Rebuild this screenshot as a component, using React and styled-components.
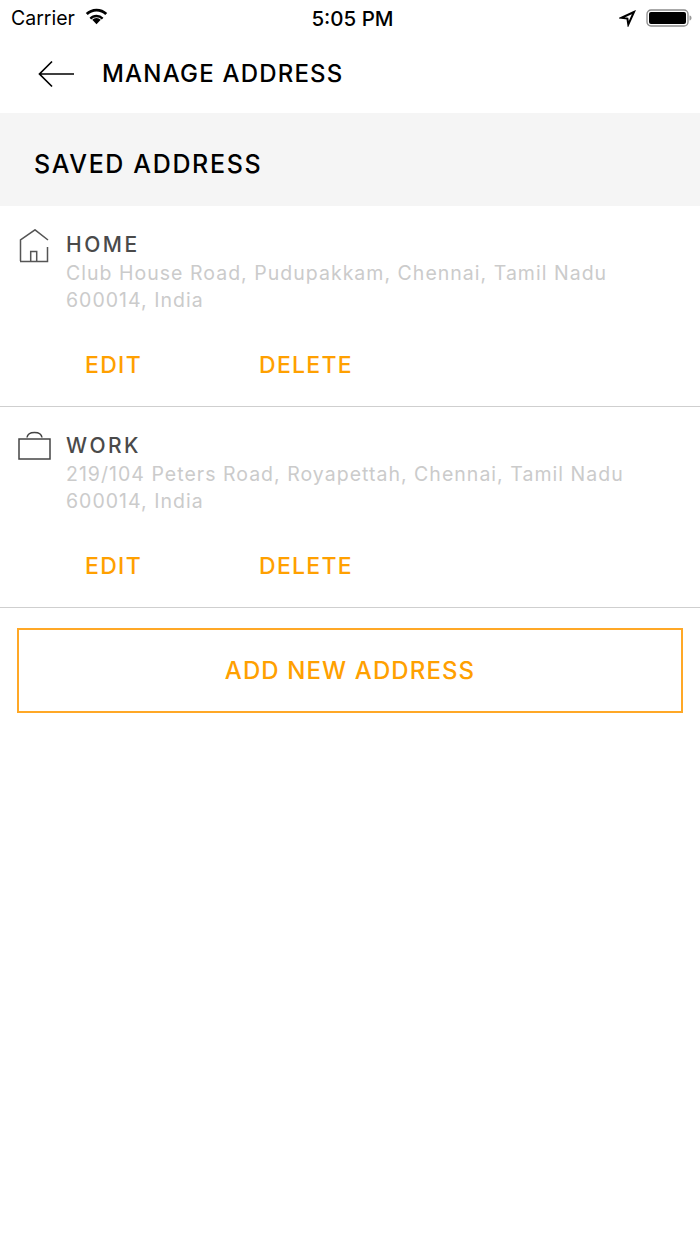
import React from 'react';
import styled, { createGlobalStyle } from 'styled-components';

const Global = createGlobalStyle`
  html, body { margin: 0; padding: 0; background: #fff; }
  * { box-sizing: border-box; }
`;

const Phone = styled.div`
  width: 700px;
  height: 1244px;
  overflow: hidden;
  background: #fff;
  font-family: Inter, "Noto Sans", sans-serif;
`;

const StatusBar = styled.div`
  height: 36px;
  display: grid;
  grid-template-columns: 1fr auto 1fr;
  align-items: center;
  padding: 0 8px 0 11px;
  color: #000;
`;

const StatusLeft = styled.div`
  display: flex;
  align-items: center;
  gap: 9px;
  font-size: 19.5px;
`;

const Clock = styled.div`
  margin-left: 2px;
  font-size: 20.5px;
  font-weight: 500;
`;

const StatusRight = styled.div`
  display: flex;
  align-items: center;
  justify-content: flex-end;
  gap: 10px;
`;

const Header = styled.header`
  height: 77px;
  display: flex;
  align-items: center;
  padding: 0 0 1px 38px;
  gap: 28px;
`;

const Title = styled.h1`
  margin: 0;
  font-size: 24px;
  line-height: 32px;
  font-weight: 500;
  letter-spacing: 1.2px;
  color: #000;
`;

const SectionBar = styled.div`
  height: 93px;
  display: flex;
  align-items: center;
  padding: 9px 0 0 34px;
  background: #f5f5f5;
`;

const SectionTitle = styled.h2`
  margin: 0;
  font-size: 25px;
  font-weight: 500;
  letter-spacing: 1.65px;
  color: #000;
`;

const Row = styled.section`
  height: 201px;
  display: flex;
  flex-direction: column;
  padding: 25px 17px 0 0;
  border-bottom: 1px solid #cfcfcf;
`;

const RowTop = styled.div`
  display: flex;
  align-items: flex-start;
`;

const IconSlot = styled.div`
  width: 66px;
  height: 36px;
  flex: none;
  margin-top: -2px;
  padding-left: 18px;
`;

const Name = styled.div`
  margin-bottom: 1px;
  font-size: 21px;
  line-height: 28px;
  font-weight: 500;
  letter-spacing: 2.5px;
  color: #4a4a4a;
`;

const Address = styled.div`
  font-size: 19.5px;
  line-height: 27px;
  letter-spacing: 1.02px;
  color: #cbcbcb;
`;

const Actions = styled.div`
  display: flex;
  margin-top: 35px;
  padding-left: 85px;
`;

const Action = styled.button`
  width: 174px;
  padding: 0;
  border: 0;
  background: none;
  text-align: left;
  font-family: inherit;
  font-size: 23px;
  line-height: 32px;
  font-weight: 500;
  letter-spacing: 1.3px;
  color: #ffa000;
`;

const AddWrap = styled.div`
  padding: 20px 17px 0;
`;

const AddButton = styled.button`
  display: block;
  width: 100%;
  height: 85px;
  padding: 0 0 1px;
  border: 2px solid #ffa826;
  background: #fff;
  font-family: inherit;
  font-size: 24px;
  font-weight: 500;
  letter-spacing: 1.1px;
  color: #ffa000;
`;

const Wifi = () => (
  <svg width="25" height="18" viewBox="0 0 24 17" fill="#000" style={{ marginTop: -4 }}>
    <path d="M12 16.500 7.900 12.200a5.800 5.800 0 0 1 8.200 0z" />
    <path d="M12 7.400c-2.600 0-5 1-6.700 2.800l1.600 1.600A7.200 7.200 0 0 1 12 9.700a7.200 7.200 0 0 1 5.100 2.100l1.600-1.600A9.500 9.500 0 0 0 12 7.400z" />
    <path d="M12 1.500C8 1.500 4.400 3.100 1.700 5.700l1.900 1.900A12 12 0 0 1 12 4.200a12 12 0 0 1 8.400 3.400l1.900-1.900A14.900 14.900 0 0 0 12 1.500z" />
  </svg>
);

const Arrow = () => (
  <svg width="17" height="17" viewBox="0 0 17 17" fill="none" stroke="#000" strokeWidth="2">
    <path d="M15 2 2.500 7.800 8.400 8.600 9.300 14.500z" />
  </svg>
);

const Battery = () => (
  <svg width="46" height="18" viewBox="0 0 46 18">
    <rect x="1" y="1" width="41" height="16" rx="4" fill="none" stroke="#8c8c8c" strokeWidth="1.300" />
    <rect x="3" y="3" width="37" height="12" rx="2" fill="#000" />
    <path d="M43.500 6.500c1.300.3 2 1.200 2 2.500s-.7 2.200-2 2.500z" fill="#9a9a9a" />
  </svg>
);

const BackArrow = () => (
  <svg width="36" height="28" viewBox="0 0 36 28" fill="none" stroke="#000" strokeWidth="1.700" style={{ display: 'block' }}>
    <path d="M37 14H2M14 1.500 1.500 14 14 26.500" />
  </svg>
);

const HomeIcon = () => (
  <svg width="32" height="34" viewBox="0 0 32 34" fill="none" stroke="#555" strokeWidth="1.500">
    <path d="M2.500 32V11L17 .8 30 11" />
    <path d="M29.500 18v14.500H2" />
    <path d="M12.700 32v-9.500h6V32" />
  </svg>
);

const WorkIcon = () => (
  <svg width="33" height="30" viewBox="0 0 33 30" fill="none" stroke="#444" strokeWidth="1.500">
    <rect x="1" y="9" width="31" height="20" />
    <path d="M9 7.500C9.500 4 12 2.500 16.500 2.500S23.500 4 24 7.500" />
  </svg>
);

const rows = [
  {
    name: 'HOME',
    icon: <HomeIcon />,
    lines: ['Club House Road, Pudupakkam, Chennai, Tamil Nadu', '600014, India'],
  },
  {
    name: 'WORK',
    icon: <WorkIcon />,
    lines: ['219/104 Peters Road, Royapettah, Chennai, Tamil Nadu', '600014, India'],
  },
];

const App = () => (
  <Phone>
    <Global />
    <StatusBar>
      <StatusLeft>
        Carrier
        <Wifi />
      </StatusLeft>
      <Clock>5:05 PM</Clock>
      <StatusRight>
        <Arrow />
        <Battery />
      </StatusRight>
    </StatusBar>
    <Header>
      <BackArrow />
      <Title>MANAGE ADDRESS</Title>
    </Header>
    <SectionBar>
      <SectionTitle>SAVED ADDRESS</SectionTitle>
    </SectionBar>
    {rows.map((r) => (
      <Row key={r.name}>
        <RowTop>
          <IconSlot>{r.icon}</IconSlot>
          <div>
            <Name>{r.name}</Name>
            {r.lines.map((l) => (
              <Address key={l}>{l}</Address>
            ))}
          </div>
        </RowTop>
        <Actions>
          <Action>EDIT</Action>
          <Action>DELETE</Action>
        </Actions>
      </Row>
    ))}
    <AddWrap>
      <AddButton>ADD NEW ADDRESS</AddButton>
    </AddWrap>
  </Phone>
);

export default App;
